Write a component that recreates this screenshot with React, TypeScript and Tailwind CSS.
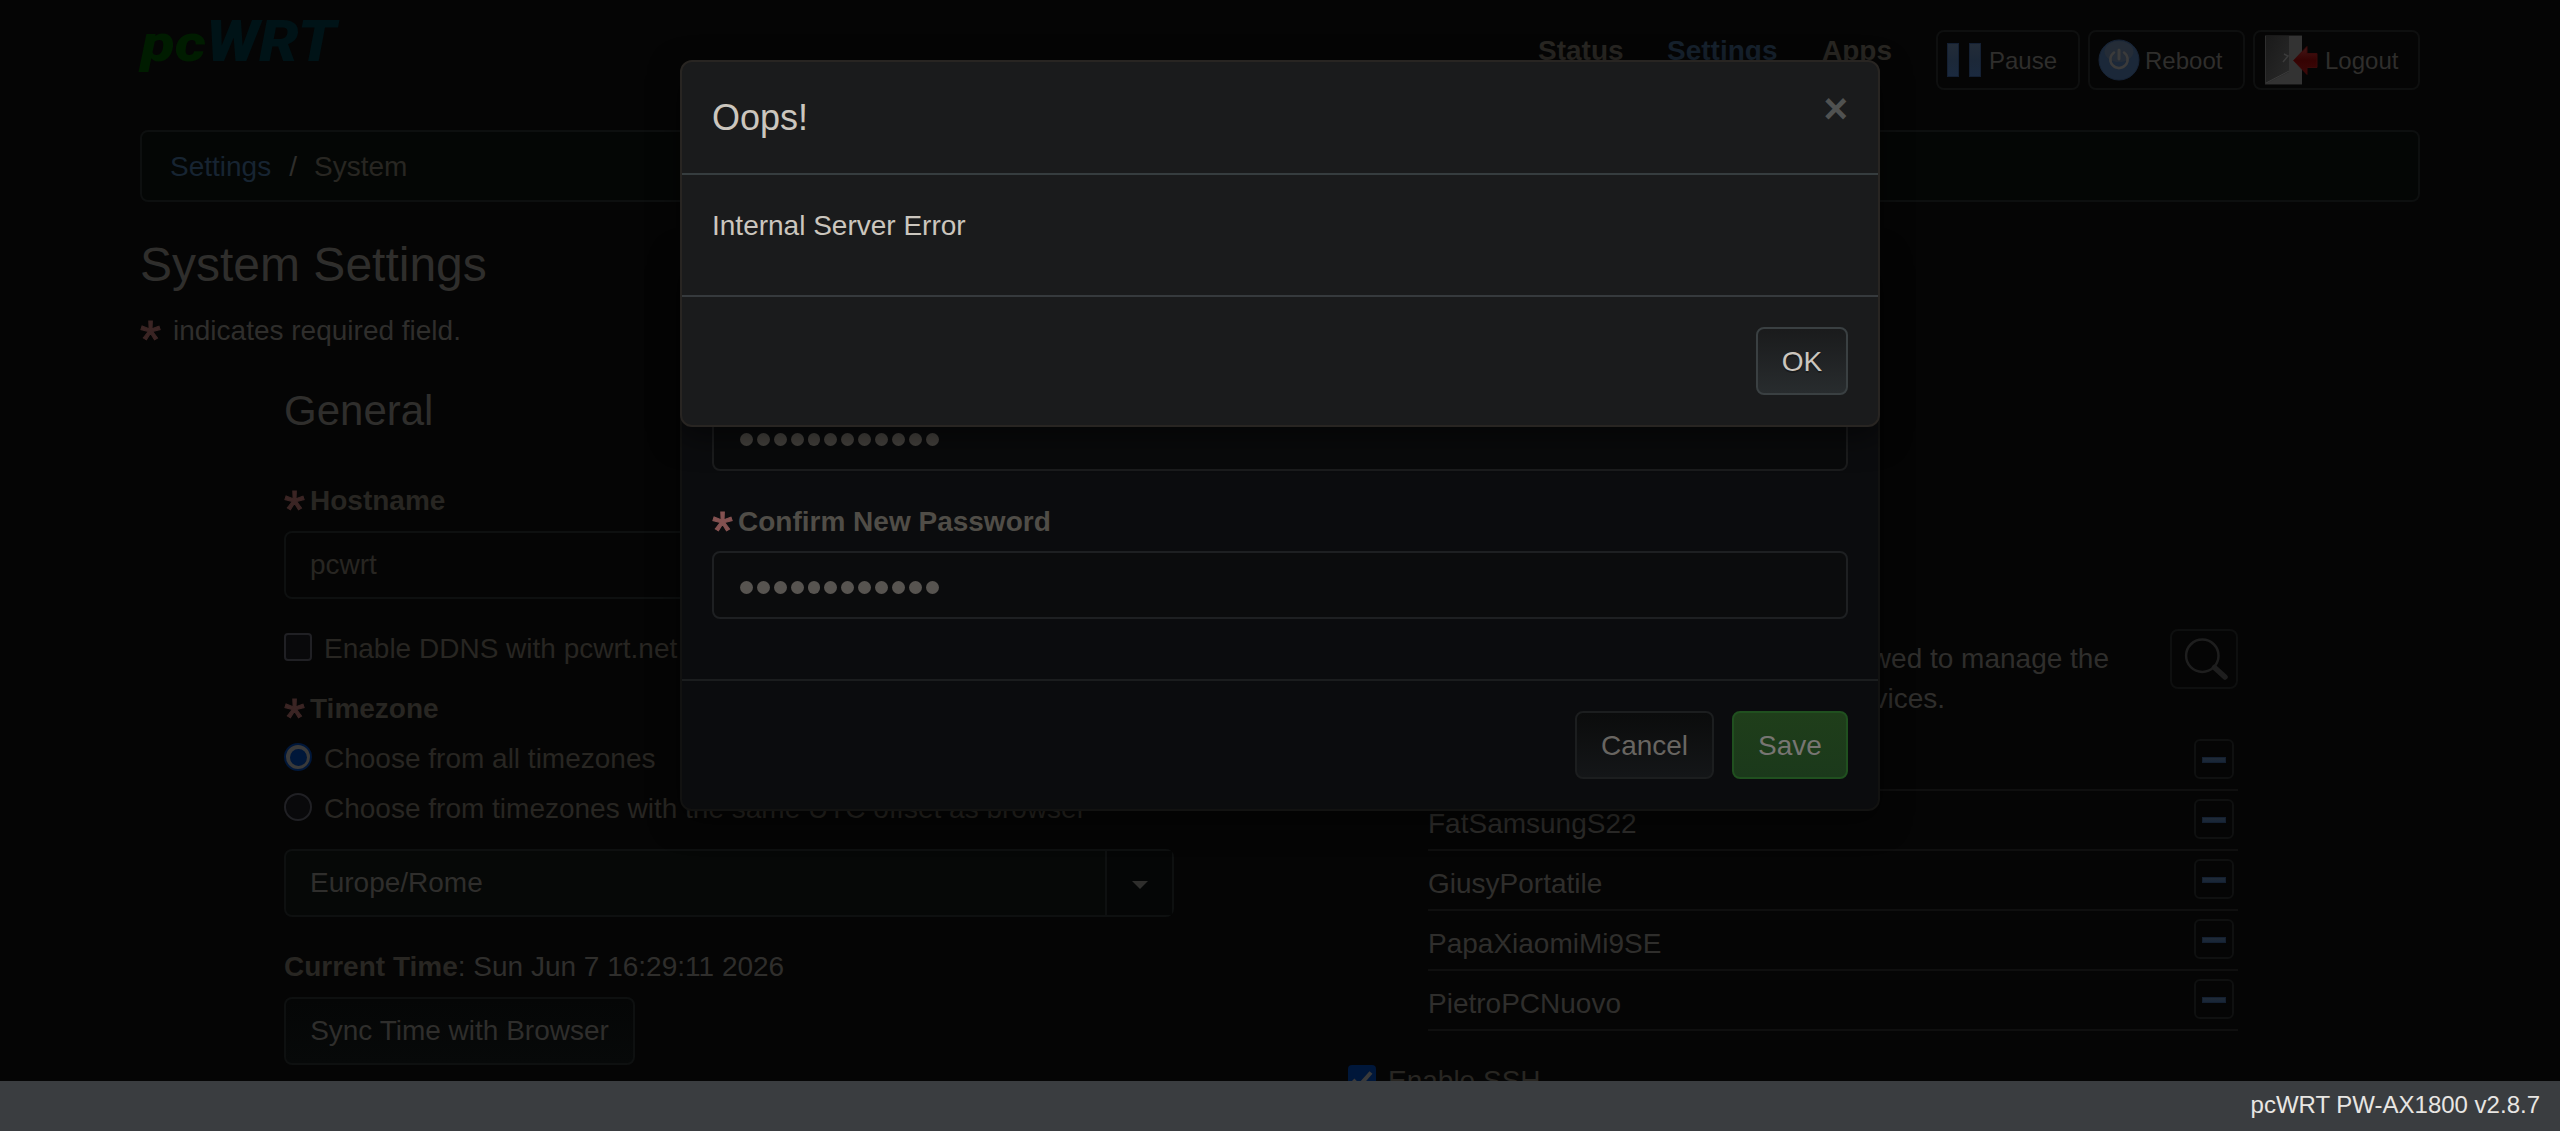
import React from 'react';

const devices = ['', 'FatSamsungS22', 'GiusyPortatile', 'PapaXiaomiMi9SE', 'PietroPCNuovo'];

const PauseIcon = () => (
  <svg className="h-[50px] w-[34px] shrink-0" viewBox="0 0 34 50">
    <defs>
      <linearGradient id="bar" x1="0" y1="0" x2="0" y2="1">
        <stop offset="0" stopColor="#232c38" />
        <stop offset="0.5" stopColor="#1c2838" />
        <stop offset="1" stopColor="#1b2a3f" />
      </linearGradient>
    </defs>
    <rect x="0.5" y="8.5" width="11" height="33" fill="url(#bar)" stroke="#142033" />
    <rect x="22.5" y="8.5" width="11" height="33" fill="url(#bar)" stroke="#142033" />
  </svg>
);

const RebootIcon = () => (
  <svg className="h-[42px] w-[42px] shrink-0" viewBox="0 0 42 42">
    <circle cx="21" cy="21" r="20" fill="#1b2839" stroke="#172335" />
    <ellipse cx="21" cy="12.5" rx="14.500" ry="10.500" fill="#242c37" />
    <path d="M16 13.500a8.6 8.6 0 1 0 10 0" fill="none" stroke="#3b3b3b" strokeWidth="2.6" strokeLinecap="round" />
    <path d="M21 11v9" stroke="#3b3b3b" strokeWidth="3" strokeLinecap="round" />
  </svg>
);

const LogoutIcon = () => (
  <svg className="h-[50px] w-[54px] shrink-0" viewBox="0 0 54 50">
    <defs>
      <linearGradient id="door" x1="0" y1="0" x2="1" y2="1">
        <stop offset="0" stopColor="#1a1a1a" />
        <stop offset="1" stopColor="#292929" />
      </linearGradient>
      <linearGradient id="arrow" x1="0" y1="0" x2="0" y2="1">
        <stop offset="0" stopColor="#451717" />
        <stop offset="0.5" stopColor="#350303" />
        <stop offset="1" stopColor="#3d0808" />
      </linearGradient>
    </defs>
    <rect x="1" y="0.5" width="37" height="49" fill="#2e2e2e" />
    <path d="M25 1h13v48H2l23-12z" fill="#333333" />
    <path d="M2 1h23v36L2 48z" fill="url(#door)" />
    <path d="M2 48l23-12" stroke="#3c3c3c" />
    <path d="M20 19l4 2-5 6" fill="none" stroke="#3b3b3b" strokeWidth="1.5" />
    <path d="M29.500 25.500L43 11.500v7h10v14h-10v7z" fill="url(#arrow)" stroke="#3a0a0a" />
  </svg>
);

const SearchIcon = () => (
  <svg className="h-[60px] w-[68px]" viewBox="0 0 68 60" fill="none" stroke="#1e1e1e">
    <circle cx="32.300" cy="26.700" r="16.200" strokeWidth="2.500" />
    <path d="M44.500 38.500l10.500 9.500" strokeWidth="5.500" strokeLinecap="round" />
  </svg>
);

const HeaderButton = ({ label, className, children }: { label: string; className: string; children: React.ReactNode }) => (
  <button className={`flex h-[60px] items-center rounded-lg border-2 border-[#0e0f0f] text-[24px] leading-[34px] text-[#2f2e2c] ${className}`}>
    {children}
    <span className="pt-px">{label}</span>
  </button>
);

const Star = ({ className }: { className: string }) => (
  <span className={`block h-[40px] w-[26px] shrink-0 text-[54px] leading-[58px] font-normal [-webkit-text-stroke:1px_currentColor] ${className}`}>*</span>
);

const Label = ({ text }: { text: string }) => (
  <div className="flex h-[40px] leading-[42px] font-bold text-[#282622]">
    <Star className="text-[#3b2524]" />
    {text}
  </div>
);

const Radio = ({ checked }: { checked?: boolean }) => (
  <span
    className={`mt-[5px] mr-3 flex h-[28px] w-[28px] shrink-0 items-center justify-center rounded-full border-2 ${
      checked ? 'border-[#00173a] bg-[#3a3a3a]' : 'border-[#202024] bg-[#09090b]'
    }`}
  >
    {checked && <span className="h-[17px] w-[17px] rounded-full bg-[#00173a]" />}
  </span>
);

const Dots = ({ className }: { className: string }) => (
  <div className="flex gap-1">
    {Array.from({ length: 12 }).map((_, i) => (
      <span key={i} className={`h-[13px] w-[12.900px] rounded-full ${className}`} />
    ))}
  </div>
);

const App = () => {
  return (
    <div className="h-[1132px] overflow-hidden bg-white">
      <div className="relative flex h-[1131px] flex-col overflow-hidden bg-[#050505] font-['Liberation_Sans',Arial,sans-serif] text-[28px] leading-[40px] text-[#2f2e2c]">
        <div className="h-[1081px] overflow-hidden px-[140px]">
          {/* Header */}
          <header className="flex h-[130px] items-start justify-between">
            <svg className="mt-3 h-[68px] w-[200px] overflow-visible" viewBox="0 0 200 68" fontFamily="Roboto, sans-serif" fontWeight="900" fontStyle="italic">
              <text x="1" y="49" fontSize="52" fill="#001c00" textLength="65" lengthAdjust="spacingAndGlyphs">pc</text>
              <text x="66" y="49" fontSize="57" fill="#001317" textLength="130" lengthAdjust="spacingAndGlyphs">WRT</text>
            </svg>
            <div className="flex pt-[30px]">
              <nav className="flex pt-px font-bold text-[#282622]">
                <a className="w-[129px]">Status</a>
                <a className="w-[155px] text-[#16212d]">Settings</a>
                <a className="w-[114px]">Apps</a>
              </nav>
              <div className="flex gap-2">
                <HeaderButton label="Pause" className="w-[144px] gap-[8px] pl-[9px]"><PauseIcon /></HeaderButton>
                <HeaderButton label="Reboot" className="w-[157px] gap-[5px] pl-[8px]"><RebootIcon /></HeaderButton>
                <HeaderButton label="Logout" className="w-[167px] gap-[7px] pl-[9px]"><LogoutIcon /></HeaderButton>
              </div>
            </div>
          </header>

          {/* Breadcrumb */}
          <div className="flex h-[72px] items-center rounded-lg border-2 border-[#0d0f0f] bg-[#040605] px-[28px] pt-[2px]">
            <span className="text-[#172432]">Settings</span>
            <span className="ml-[18px]">/</span>
            <span className="ml-[17px] text-[#282622]">System</span>
          </div>

          <h1 className="mt-8 h-[60px] text-[48px] leading-[62px]">System Settings</h1>
          <div className="mt-4 flex h-[40px] leading-[42px]">
            <Star className="mr-[7px] text-[#3b2524]" />
            indicates required field.
          </div>

          <div className="mt-9 flex pl-[144px]">
            {/* General */}
            <section className="w-[890px]">
              <h2 className="h-[48px] text-[42px] leading-[50px]">General</h2>
              <div className="mt-[46px]"><Label text="Hostname" /></div>
              <div className="mt-[11px] flex h-[68px] items-center rounded-lg border-2 border-[#0e1010] px-[24px] text-[#282622]">
                pcwrt
              </div>
              <div className="mt-[29px] flex h-[40px] leading-[42px] text-[#282622]">
                <span className="mt-[5px] mr-3 h-[28px] w-[28px] rounded-[4px] border-2 border-[#202024] bg-[#09090b]" />
                Enable DDNS with pcwrt.net
              </div>
              <div className="mt-5"><Label text="Timezone" /></div>
              <div className="mt-[10px] flex h-[40px] leading-[42px] text-[#282622]"><Radio checked />Choose from all timezones</div>
              <div className="mt-[10px] flex h-[40px] leading-[42px] text-[#282622]"><Radio />Choose from timezones with the same UTC offset as browser</div>
              <div className="mt-[21px] flex h-[68px] rounded-lg border-2 border-[#0e1010] bg-[#060807]">
                <div className="flex flex-1 items-center pl-[24px]">Europe/Rome</div>
                <div className="flex w-[67px] items-center justify-center border-l-2 border-[#0e1010] bg-[#050606]">
                  <svg className="mt-[4px] h-2 w-4" viewBox="0 0 16 8"><path d="M0 0h16l-8 8z" fill="#2f2e2c" /></svg>
                </div>
              </div>
              <div className="mt-[29px] h-[40px] leading-[42px]"><b className="text-[#282622]">Current Time</b>: Sun Jun 7 16:29:11 2026</div>
              <button className="mt-[11px] block h-[68px] w-[351px] rounded-lg border-2 border-[#0e1010] bg-linear-to-b from-[#050606] to-[#070909] text-center">
                Sync Time with Browser
              </button>
            </section>

            {/* Device access */}
            <section className="ml-[174px] w-[890px] pt-[243px]">
              <div className="flex h-[89px] justify-between pl-[80px]">
                <div className="pt-[10px] text-right">
                  <div className="w-[681px]">allowed to manage the</div>
                  <div className="w-[517px]">devices.</div>
                </div>
                <button className="h-[60px] w-[68px] rounded-lg border-2 border-[#0e0f0f]">
                  <span className="-m-[2px] block"><SearchIcon /></span>
                </button>
              </div>
              <ul className="mt-[13px] ml-[80px]">
                {devices.map((name) => (
                  <li key={name} className="flex h-[60px] justify-between border-b-2 border-[#0f0f0f] pt-2 pr-1">
                    <span className="pt-[5px]">{name}</span>
                    <button className="flex h-[40px] w-[40px] items-center justify-center rounded-md border-2 border-[#0f1010]">
                      <span className="mt-[2px] h-[6px] w-[24px] border border-[#142031] bg-linear-to-b from-[#202a36] to-[#182638]" />
                    </button>
                  </li>
                ))}
              </ul>
              <div className="mt-[29px] flex h-[40px] leading-[42px] text-[#282622]">
                <span className="mt-[5px] mr-3 h-[28px] w-[28px] rounded-[4px] bg-[#00173a]">
                  <svg viewBox="0 0 28 28" fill="none" stroke="#3a3a3a" strokeWidth="4"><path d="M5 15l6 6L23 7.500" /></svg>
                </span>
                Enable SSH
              </div>
            </section>
          </div>
        </div>

        {/* Password dialog */}
        <div className="absolute top-[250px] left-[680px] flex h-[561px] w-[1200px] flex-col justify-end rounded-xl border-2 border-[#121211] bg-[#0b0c0e] text-[#5f5c58] shadow-[0_10px_30px_rgba(0,0,0,0.5)]">
          <div className="px-[30px]">
            <div className="flex h-[68px] items-center rounded-lg border-2 border-[#1b1c1d] bg-[#090a0b] px-[26px] pt-1"><Dots className="bg-[#44413d]" /></div>
            <div className="mt-[30px] flex h-[40px] leading-[42px] font-bold text-[#504d47]">
              <Star className="text-[#845251]" />
              Confirm New Password
            </div>
            <div className="mt-[10px] flex h-[68px] items-center rounded-lg border-2 border-[#1e2022] bg-[#0b0c0d] px-[26px] pt-1"><Dots className="bg-[#575450]" /></div>
          </div>
          <div className="mt-[60px] flex h-[130px] justify-end gap-[18px] border-t-2 border-[#1b1d1e] px-[30px] pt-[30px]">
            <button className="h-[68px] w-[139px] rounded-lg border-2 border-[#1c1e1f] bg-linear-to-b from-[#0b0c0c] to-[#141618] pt-[2px] text-[#686561]">Cancel</button>
            <button className="h-[68px] w-[116px] rounded-lg border-2 border-[#20501f] bg-linear-to-b from-[#1f3e1a] to-[#1b391b] pt-[2px] text-[#777572]">Save</button>
          </div>
        </div>

        {/* Error dialog */}
        <div className="absolute top-[60px] left-[680px] h-[367px] w-[1200px] rounded-xl border-2 border-[#282522] bg-[#1a1b1c] text-[#cbc6be] shadow-[0_10px_30px_rgba(0,0,0,0.5)]">
          <div className="flex h-[113px] justify-between border-b-2 border-[#363d3f] px-[30px]">
            <h4 className="pt-[30px] text-[36px] leading-[52px]">Oops!</h4>
            <button className="h-[42px] pt-[26px] text-[42px] leading-[42px] font-bold text-[#505251]">×</button>
          </div>
          <div className="h-[120px] px-[30px] pt-[31px]">Internal Server Error</div>
          <div className="flex h-[130px] justify-end border-t-2 border-[#363a3d] px-[30px] pt-[30px]">
            <button className="h-[68px] w-[92px] rounded-lg border-2 border-[#3a4042] bg-linear-to-b from-[#1a1b1c] to-[#282c2e] pt-[2px] [text-shadow:0_2px_0_rgba(0,0,0,0.3)]">OK</button>
          </div>
        </div>

        <footer className="relative h-[50px] bg-[#3a3d40] pr-5 text-right text-[24px] leading-[48px] text-[#e8e6e3]">pcWRT PW-AX1800 v2.8.7</footer>
      </div>
    </div>
  );
};

export default App;
